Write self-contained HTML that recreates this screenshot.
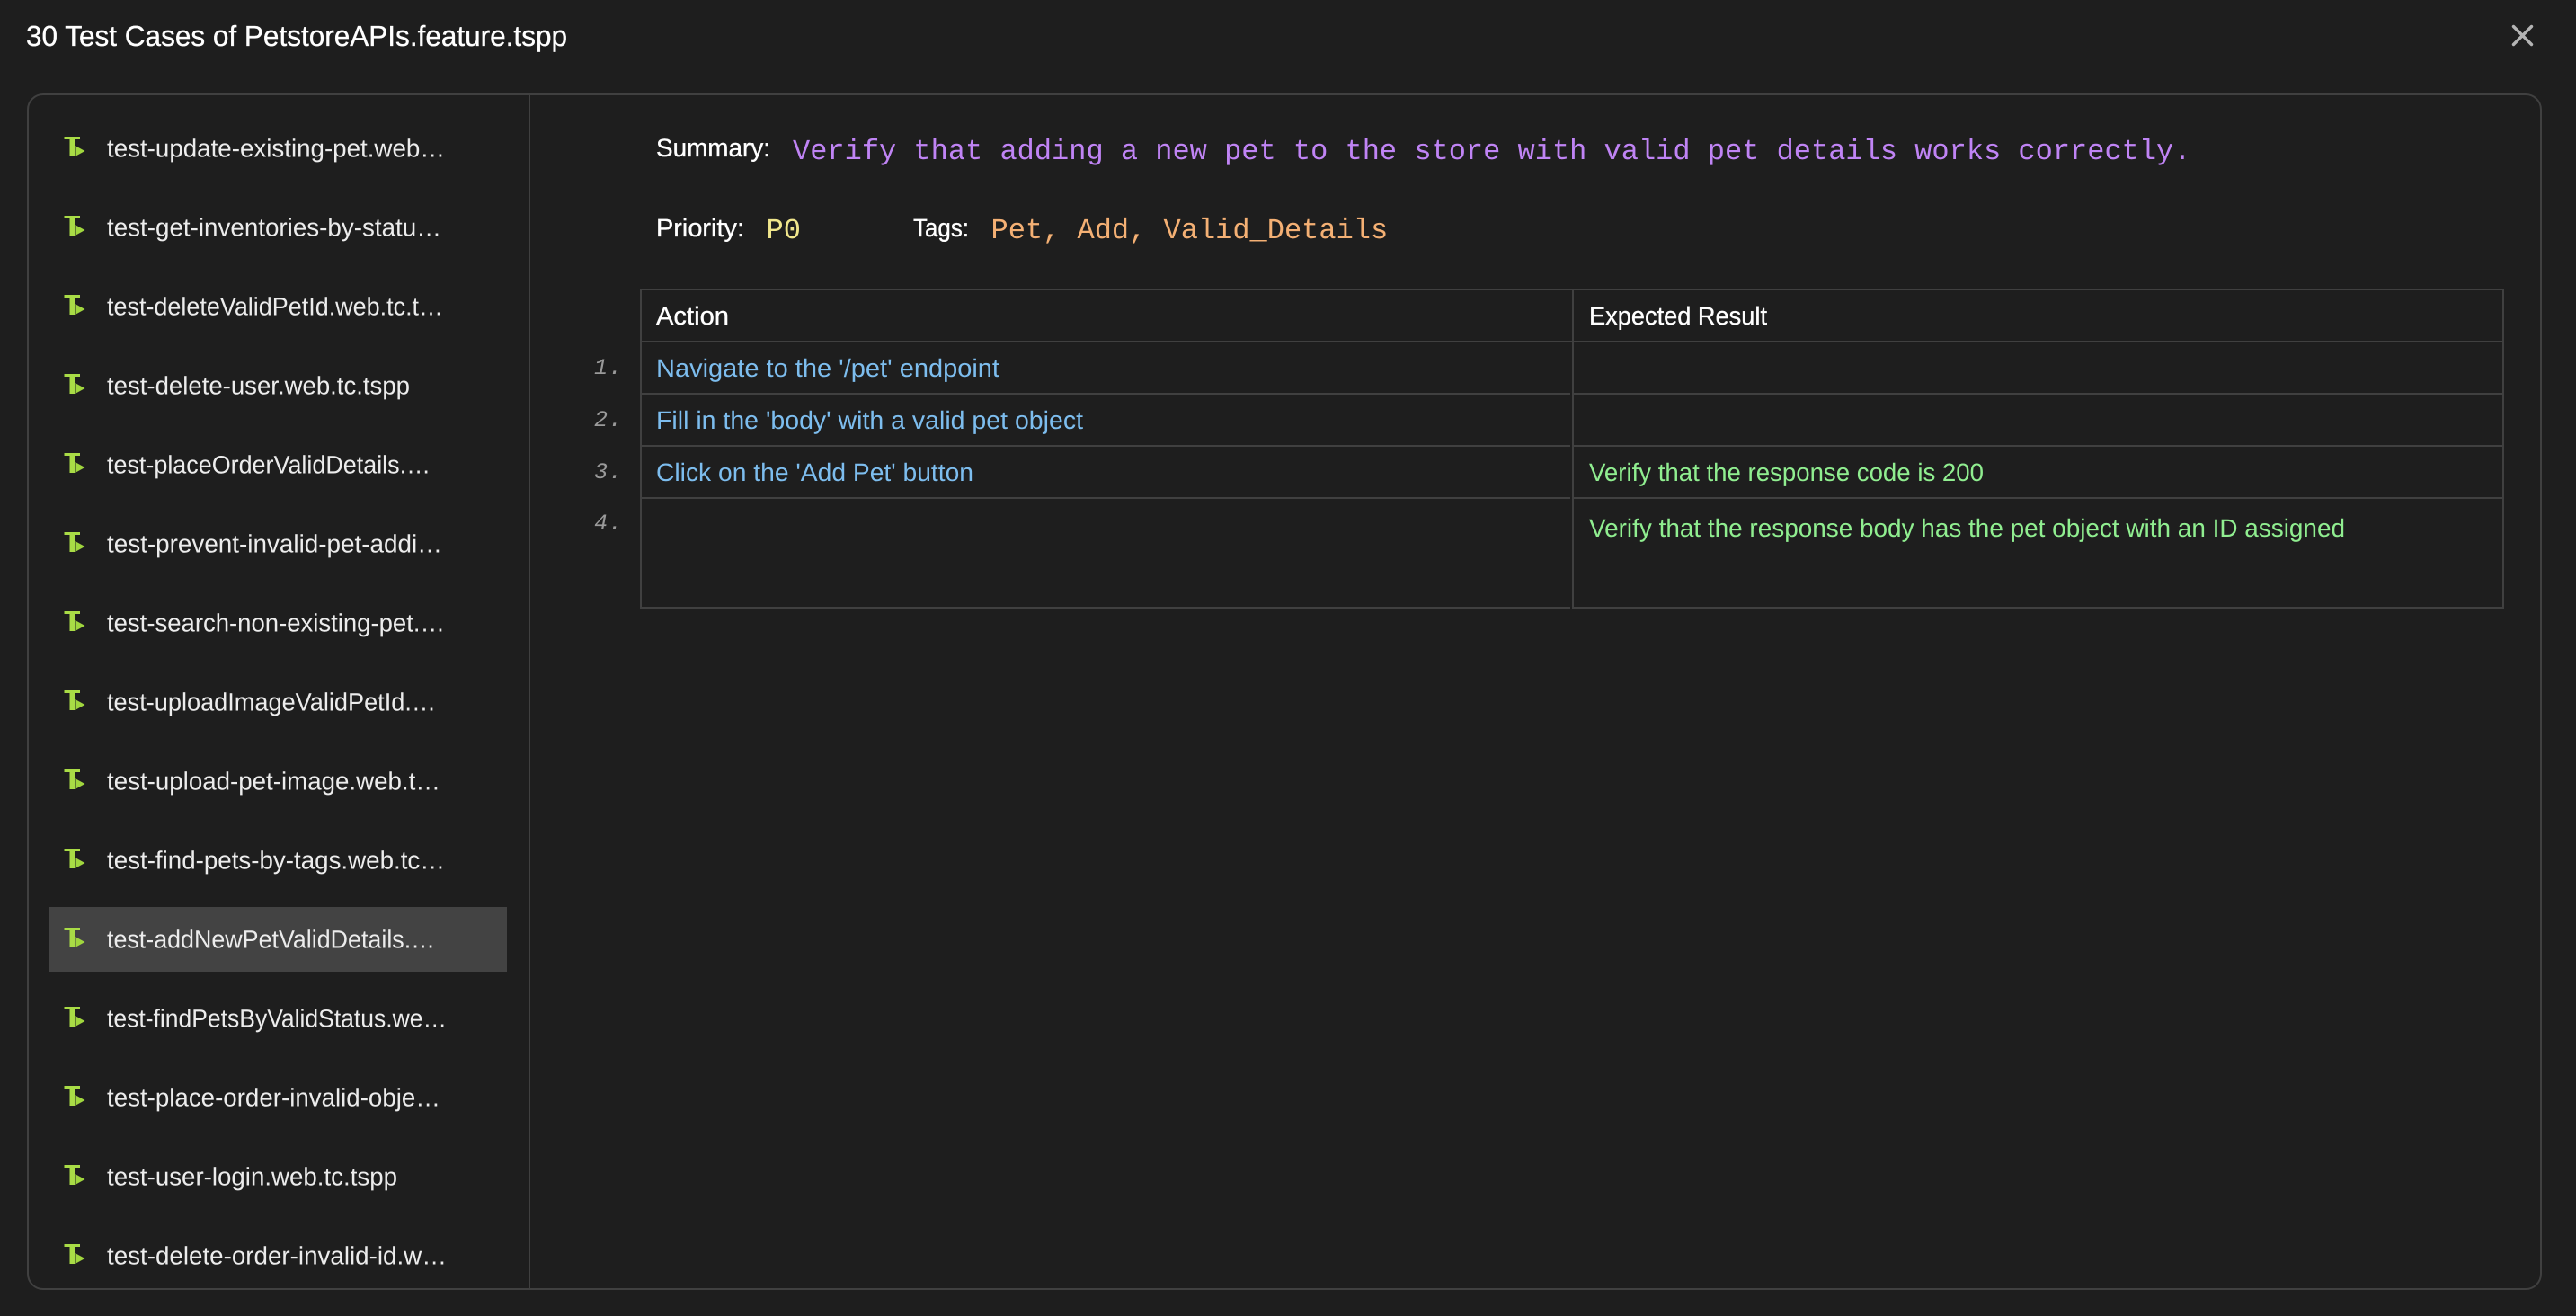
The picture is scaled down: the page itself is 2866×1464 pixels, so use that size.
<!DOCTYPE html>
<html lang="en">
<head>
<meta charset="utf-8">
<title>30 Test Cases of PetstoreAPIs.feature.tspp</title>
<style>
html,body{margin:0;padding:0;background:#1e1e1e;width:2866px;height:1464px;overflow:hidden}
svg{display:block}
text{white-space:pre;text-rendering:geometricPrecision}
.s{font-family:"Liberation Sans",sans-serif;font-size:28px}
.m{font-family:"Liberation Mono",monospace;font-size:32px}
.w{fill:#ffffff;stroke:#ffffff;stroke-width:.3px}
.l{fill:#ececec}
.b{fill:#7dbdee}
.g{fill:#90ee90}
.n{font-family:"Liberation Mono",monospace;font-size:25px;font-style:italic;fill:#9a9a9a}
</style>
</head>
<body>
<svg xmlns="http://www.w3.org/2000/svg" width="2866" height="1464" viewBox="0 0 2866 1464">
<defs>
<g id="ic">
<polygon fill="#a9dc46" points="71.5,152 89,152 89,155 83,155 83,174 77.5,174 77.5,155 71.5,155"/>
<polygon fill="#a0d63e" points="83.5,162 94.5,168 83.5,174"/>
</g>
</defs>
<rect width="2866" height="1464" fill="#1e1e1e"/>

<text x="29" y="51" class="s w" style="font-size:32px" textLength="602" lengthAdjust="spacingAndGlyphs">30 Test Cases of PetstoreAPIs.feature.tspp</text>
<g stroke="#b4b4b4" stroke-width="3.4" stroke-linecap="round"><line x1="2796.5" y1="29.5" x2="2816.5" y2="49.5"/><line x1="2816.5" y1="29.5" x2="2796.5" y2="49.5"/></g>

<rect x="31" y="105" width="2796" height="1329" rx="17" fill="none" stroke="#404040" stroke-width="2"/>
<rect x="588" y="105" width="2" height="1329" fill="#404040"/>
<rect x="55" y="1009" width="509" height="72" fill="#434343"/>

<use href="#ic"/><text x="119" y="174.5" class="s l" textLength="376" lengthAdjust="spacingAndGlyphs">test-update-existing-pet.web…</text>
<use href="#ic" y="88"/><text x="119" y="262.5" class="s l" textLength="372" lengthAdjust="spacingAndGlyphs">test-get-inventories-by-statu…</text>
<use href="#ic" y="176"/><text x="119" y="350.5" class="s l" textLength="374" lengthAdjust="spacingAndGlyphs">test-deleteValidPetId.web.tc.t…</text>
<use href="#ic" y="264"/><text x="119" y="438.5" class="s l" textLength="337" lengthAdjust="spacingAndGlyphs">test-delete-user.web.tc.tspp</text>
<use href="#ic" y="352"/><text x="119" y="526.5" class="s l" textLength="360" lengthAdjust="spacingAndGlyphs">test-placeOrderValidDetails.…</text>
<use href="#ic" y="440"/><text x="119" y="614.5" class="s l" textLength="373" lengthAdjust="spacingAndGlyphs">test-prevent-invalid-pet-addi…</text>
<use href="#ic" y="528"/><text x="119" y="702.5" class="s l" textLength="376" lengthAdjust="spacingAndGlyphs">test-search-non-existing-pet.…</text>
<use href="#ic" y="616"/><text x="119" y="790.5" class="s l" textLength="366" lengthAdjust="spacingAndGlyphs">test-uploadImageValidPetId.…</text>
<use href="#ic" y="704"/><text x="119" y="878.5" class="s l" textLength="371" lengthAdjust="spacingAndGlyphs">test-upload-pet-image.web.t…</text>
<use href="#ic" y="792"/><text x="119" y="966.5" class="s l" textLength="376" lengthAdjust="spacingAndGlyphs">test-find-pets-by-tags.web.tc…</text>
<use href="#ic" y="880"/><text x="119" y="1054.5" class="s l" textLength="365" lengthAdjust="spacingAndGlyphs">test-addNewPetValidDetails.…</text>
<use href="#ic" y="968"/><text x="119" y="1142.5" class="s l" textLength="378" lengthAdjust="spacingAndGlyphs">test-findPetsByValidStatus.we…</text>
<use href="#ic" y="1056"/><text x="119" y="1230.5" class="s l" textLength="371" lengthAdjust="spacingAndGlyphs">test-place-order-invalid-obje…</text>
<use href="#ic" y="1144"/><text x="119" y="1318.5" class="s l" textLength="323" lengthAdjust="spacingAndGlyphs">test-user-login.web.tc.tspp</text>
<use href="#ic" y="1232"/><text x="119" y="1406.5" class="s l" textLength="378" lengthAdjust="spacingAndGlyphs">test-delete-order-invalid-id.w…</text>

<text x="730" y="174" class="s w" textLength="127" lengthAdjust="spacingAndGlyphs">Summary:</text>
<text x="882" y="177" class="m" fill="#c084f5">Verify that adding a new pet to the store with valid pet details works correctly.</text>
<text x="730" y="263" class="s w" textLength="98" lengthAdjust="spacingAndGlyphs">Priority:</text>
<text x="852.5" y="265" class="m" fill="#f0e68c">P0</text>
<text x="1016" y="263" class="s w" textLength="62" lengthAdjust="spacingAndGlyphs">Tags:</text>
<text x="1102.5" y="265" class="m" fill="#f4b074">Pet, Add, Valid_Details</text>

<g fill="#404040">
<rect x="712" y="321" width="2074" height="2"/>
<rect x="712" y="379" width="2074" height="2"/>
<rect x="712" y="437" width="1035" height="2"/><rect x="1751" y="437" width="1035" height="2"/>
<rect x="712" y="495" width="1035" height="2"/><rect x="1751" y="495" width="1035" height="2"/>
<rect x="712" y="553" width="1035" height="2"/><rect x="1751" y="553" width="1035" height="2"/>
<rect x="712" y="675" width="1035" height="2"/><rect x="1751" y="675" width="1035" height="2"/>
<rect x="712" y="321" width="2" height="356"/>
<rect x="1749" y="321" width="2" height="356"/>
<rect x="2784" y="321" width="2" height="356"/>
</g>

<text x="730" y="361" class="s w" textLength="81" lengthAdjust="spacingAndGlyphs">Action</text>
<text x="1768" y="361" class="s w" textLength="198" lengthAdjust="spacingAndGlyphs">Expected Result</text>

<text x="661" y="416" class="n" textLength="31">1.</text>
<text x="661" y="474" class="n" textLength="31">2.</text>
<text x="661" y="532" class="n" textLength="31">3.</text>
<text x="661" y="589" class="n" textLength="31">4.</text>

<text x="730" y="419" class="s b" textLength="382" lengthAdjust="spacingAndGlyphs">Navigate to the '/pet' endpoint</text>
<text x="730" y="477" class="s b" textLength="475" lengthAdjust="spacingAndGlyphs">Fill in the 'body' with a valid pet object</text>
<text x="730" y="535" class="s b" textLength="353" lengthAdjust="spacingAndGlyphs">Click on the 'Add Pet' button</text>
<text x="1768" y="535" class="s g" textLength="439" lengthAdjust="spacingAndGlyphs">Verify that the response code is 200</text>
<text x="1768" y="597" class="s g" textLength="841" lengthAdjust="spacingAndGlyphs">Verify that the response body has the pet object with an ID assigned</text>
</svg>
</body>
</html>
